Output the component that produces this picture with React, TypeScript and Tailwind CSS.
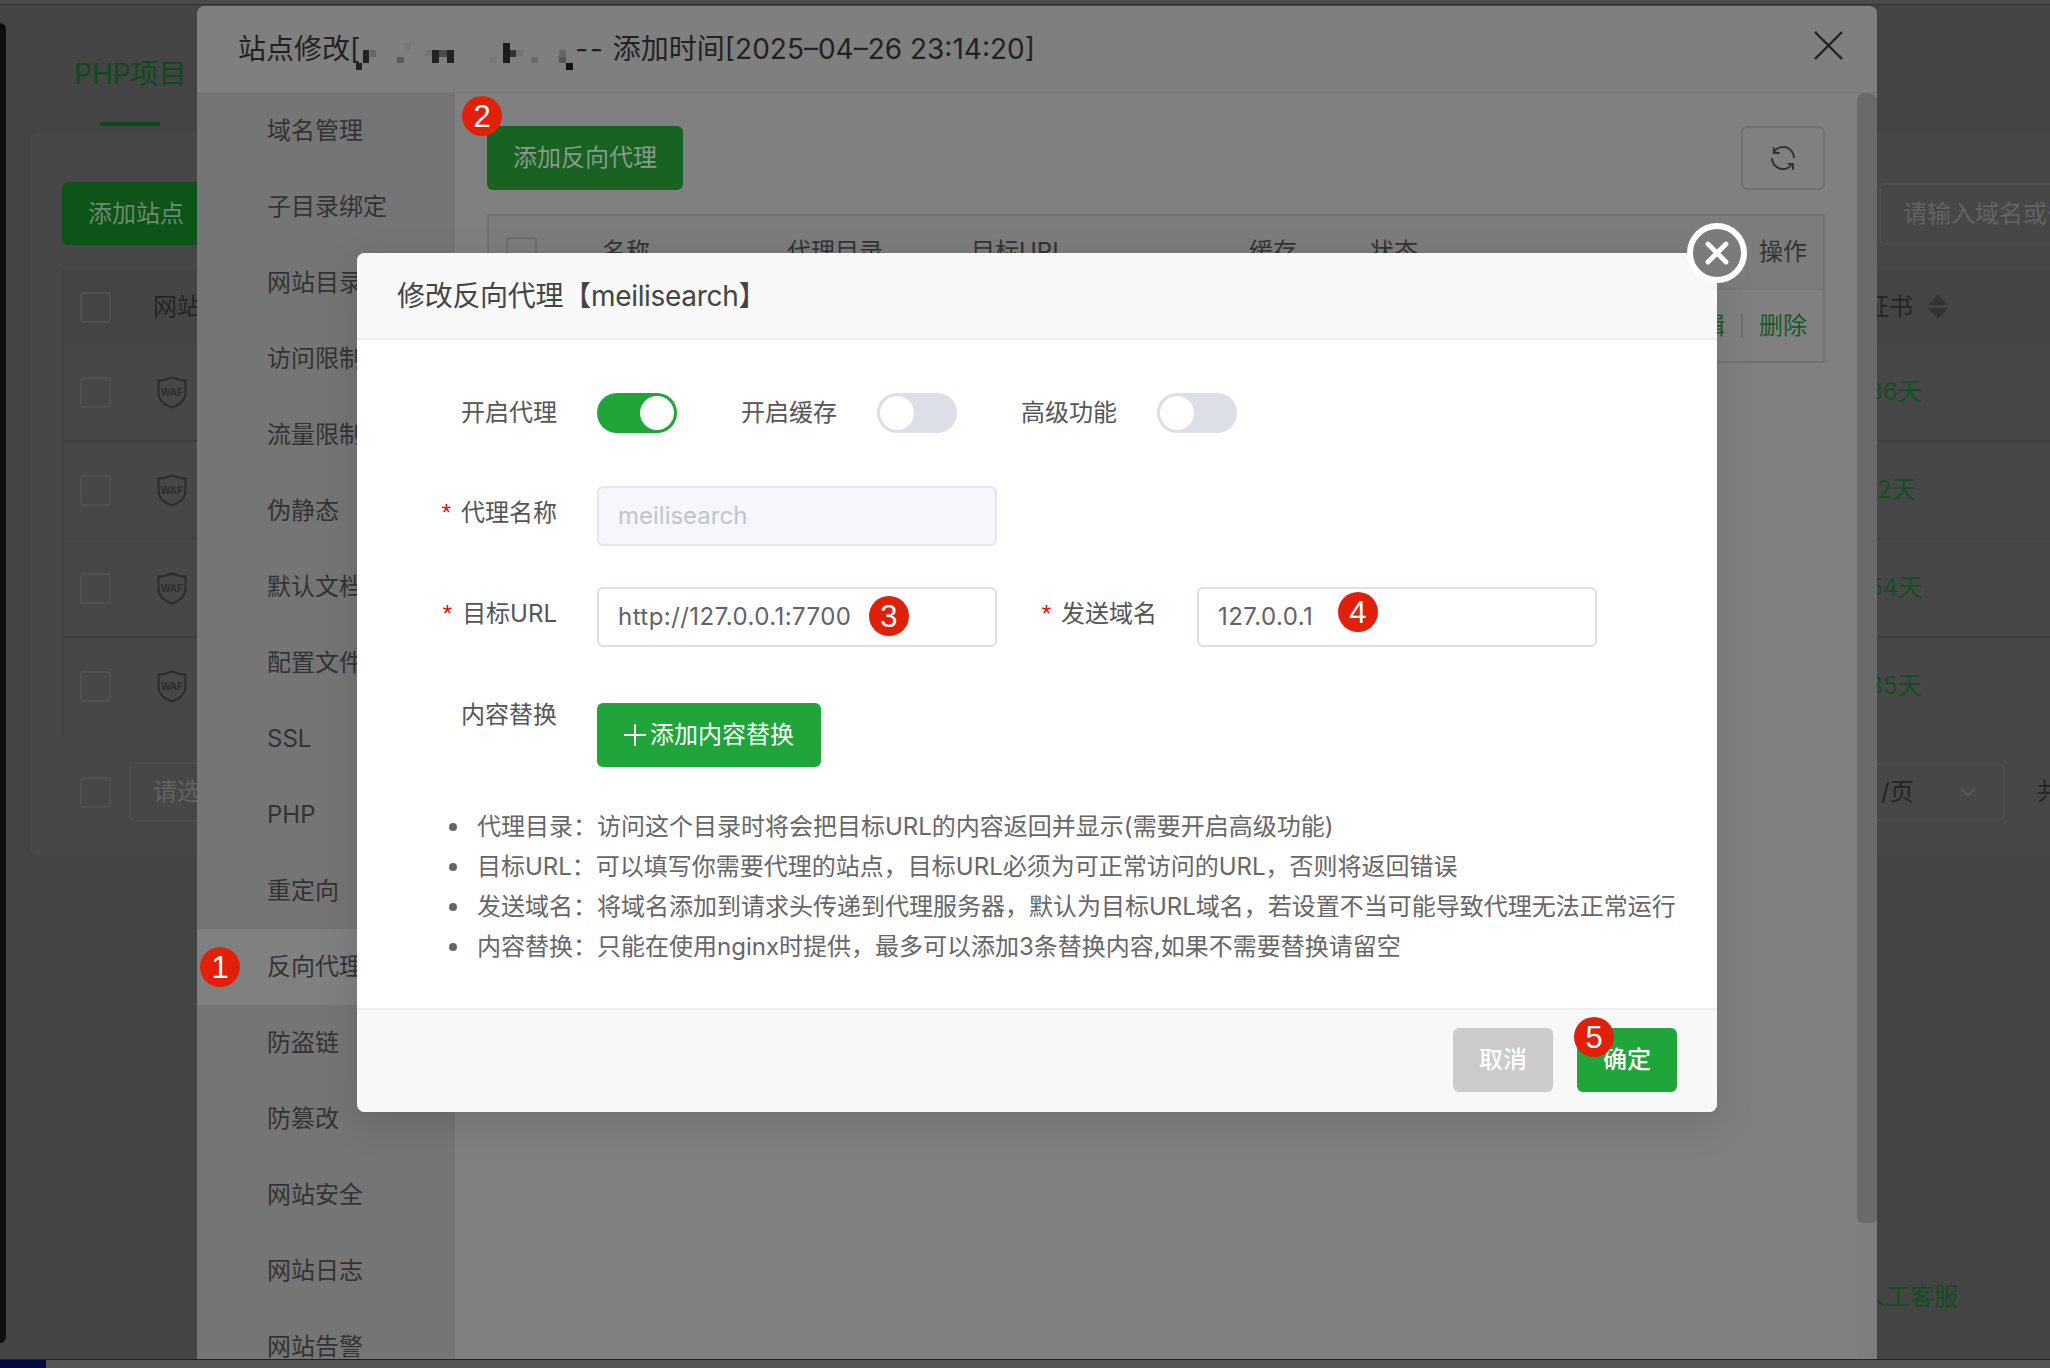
import { ChevronDown, X } from 'lucide-react';
import type { ReactNode } from 'react';

const menuItems = ['域名管理', '子目录绑定', '网站目录', '访问限制', '流量限制', '伪静态', '默认文档', '配置文件', 'SSL', 'PHP', '重定向', '反向代理', '防盗链', '防篡改', '网站安全', '网站日志', '网站告警'];

const siteRows = [
    { days: '36天', offset: 'ml-[1681px]', line: 'border-[#3e3e3e]' },
    { days: '2天', offset: 'ml-[1690px]', line: 'border-[#424242]' },
    { days: '54天', offset: 'ml-[1681px]', line: 'border-[#3e3e3e]' },
    { days: '35天', offset: 'ml-[1681px]', line: 'border-transparent' },
];

const tips = [
    '代理目录：访问这个目录时将会把目标URL的内容返回并显示(需要开启高级功能)',
    '目标URL：可以填写你需要代理的站点，目标URL必须为可正常访问的URL，否则将返回错误',
    '发送域名：将域名添加到请求头传递到代理服务器，默认为目标URL域名，若设置不当可能导致代理无法正常运行',
    '内容替换：只能在使用nginx时提供，最多可以添加3条替换内容,如果不需要替换请留空',
];

// pixelated part of the site name in the title
const mosaic = [
    [7, 7, 6, 13, '#222'], [14, 7, 6, 7, '#666'], [0, 20, 6, 7, '#222'], [41, 14, 7, 6, '#5a5a5a'], [48, 0, 7, 7, '#787878'],
    [76, 7, 7, 13, '#222'], [69, 7, 7, 6, '#767676'], [83, 7, 8, 7, '#4a4a4a'], [91, 7, 7, 13, '#222'],
    [134, 14, 6, 6, '#777'], [147, 0, 7, 20, '#1c1c1c'], [154, 7, 6, 7, '#333'], [160, 7, 7, 6, '#747474'],
    [175, 14, 7, 6, '#6a6a6a'], [203, 7, 7, 7, '#666'], [203, 14, 7, 6, '#555'], [210, 20, 7, 7, '#111'],
];

function Badge({ n, className }: { n: number; className: string }) {
    return (
        <span className={`absolute flex h-10 w-10 items-center justify-center rounded-full bg-[#e1200c] font-['Liberation_Sans',sans-serif] text-[31px] leading-none text-white ${className}`}>
            {n}
        </span>
    );
}

function Checkbox({ className }: { className: string }) {
    return <div className={`h-[31px] w-[31px] shrink-0 rounded-[4px] border-2 ${className}`} />;
}

function WafShield() {
    return (
        <svg viewBox="0 0 30 33" className="h-[33px] w-[30px] shrink-0">
            <path d="M15 1.5 C20 3.5 24 4.5 28.5 4.5 V17 C28.5 24 22 29 15 31.5 C8 29 1.5 24 1.5 17 V4.5 C6 4.5 10 3.5 15 1.5 Z" fill="none" stroke="#2c2c2c" strokeWidth="2" />
            <text x="15" y="20" textAnchor="middle" fontSize="10" fontWeight="700" fill="#2c2c2c" fontFamily="Liberation Sans">WAF</text>
        </svg>
    );
}

function Switch({ on }: { on?: boolean }) {
    return (
        <div className={`flex h-10 w-20 shrink-0 items-center rounded-full p-[3px] ${on ? 'justify-end bg-[#20a53a]' : 'bg-[#dcdfe6]'}`}>
            <div className="h-[34px] w-[34px] rounded-full bg-white" />
        </div>
    );
}

function FieldLabel({ children, width, required }: { children: ReactNode; width: string; required?: boolean }) {
    return (
        <div className={`${width} shrink-0 text-right leading-[54px] text-[#555]`}>
            {required && <span className="mr-[10px] font-['Liberation_Sans',sans-serif] text-[#f00]">*</span>}
            {children}
        </div>
    );
}

function ReverseProxyDialog() {
    return (
        <div className="absolute left-[357px] top-[253px] z-20 flex h-[859px] w-[1360px] flex-col rounded-lg bg-white text-[24px] shadow-[0_12px_40px_rgba(0,0,0,0.12)]">
            <div className="flex h-[87px] shrink-0 items-center rounded-t-lg border-b-2 border-[#eee] bg-[#f8f8f8] pl-[40px] text-[28px] tracking-[-0.3px] text-[#444]">
                修改反向代理【meilisearch】
            </div>
            <button className="absolute -right-[30px] -top-[30px] flex h-[60px] w-[60px] items-center justify-center rounded-full border-[6px] border-white bg-[#7b7b7b]">
                <X className="h-[36px] w-[36px] text-white" strokeWidth={3.2} />
            </button>

            <div className="flex flex-1 flex-col pt-[53px]">
                <div className="flex items-center">
                    <div className="w-[200px] text-right text-[#555]">开启代理</div>
                    <div className="ml-[40px]"><Switch on /></div>
                    <div className="ml-[64px] text-[#555]">开启缓存</div>
                    <div className="ml-[40px]"><Switch /></div>
                    <div className="ml-[64px] text-[#555]">高级功能</div>
                    <div className="ml-[40px]"><Switch /></div>
                </div>

                <div className="mt-[53px] flex">
                    <FieldLabel width="w-[200px]" required>代理名称</FieldLabel>
                    <div className="ml-[40px] flex h-[60px] w-[400px] items-center rounded-md border-2 border-[#e4e7ed] bg-[#f5f7fa] pl-[19px] text-[#c0c4cc]">meilisearch</div>
                </div>

                <div className="mt-[41px] flex">
                    <FieldLabel width="w-[200px]" required>目标URL</FieldLabel>
                    <div className="relative ml-[40px] flex h-[60px] w-[400px] items-center rounded-md border-2 border-[#dcdfe6] pl-[19px] tracking-[0.45px] text-[#606266]">
                        http://127.0.0.1:7700
                        <Badge n={3} className="left-[270px] top-[7px]" />
                    </div>
                    <FieldLabel width="w-[160px]" required>发送域名</FieldLabel>
                    <div className="relative ml-[40px] flex h-[60px] w-[400px] items-center rounded-md border-2 border-[#dcdfe6] pl-[19px] tracking-[0.45px] text-[#606266]">
                        127.0.0.1
                        <Badge n={4} className="left-[139px] top-[3px]" />
                    </div>
                </div>

                <div className="mt-[56px] flex">
                    <div className="w-[200px] text-right leading-6 text-[#555]">内容替换</div>
                    <button className="ml-[40px] flex h-[64px] w-[224px] items-center justify-center rounded-md bg-[#20a53a] text-white">
                        <svg viewBox="0 0 22 22" className="mr-[4px] h-[22px] w-[22px]"><path d="M11 0V22M0 11H22" stroke="#fff" strokeWidth="2" /></svg>
                        添加内容替换
                    </button>
                </div>

                <ul className="mt-[40px] pl-[92px] leading-[40px] text-[#666]">
                    {tips.map((tip) => (
                        <li key={tip} className="flex items-center whitespace-nowrap">
                            <span className="mr-[20px] h-[8px] w-[8px] shrink-0 rounded-full bg-[#666]" />
                            {tip}
                        </li>
                    ))}
                </ul>
            </div>

            <div className="flex h-[104px] shrink-0 items-start justify-end gap-[24px] rounded-b-lg border-t-2 border-[#eee] bg-[#f8f8f8] pr-[40px] pt-[18px] font-medium text-white">
                <button className="h-[64px] w-[100px] rounded-md bg-[#cbcbcb]">取消</button>
                <button className="relative h-[64px] w-[100px] rounded-md bg-[#20a53a]">
                    确定
                    <Badge n={5} className="-left-[3px] -top-[11px] font-normal" />
                </button>
            </div>
        </div>
    );
}

function SiteSettingsDialog() {
    return (
        <div className="absolute left-[197px] top-[6px] z-10 flex h-[1353px] w-[1680px] flex-col overflow-hidden rounded-t-lg bg-[#808080] text-[24px]">
            <div className="flex h-[87px] shrink-0 items-center border-b border-[#787878] bg-[#7f7f7f] pl-[41px] text-[28px] text-[#222]">
                <span>站点修改[</span>
                <svg viewBox="0 0 217 27" className="-ml-[4px] mt-[14px] h-[27px] w-[217px] shrink-0">
                    {mosaic.map(([x, y, w, h, fill], i) => (
                        <rect key={i} x={x} y={y} width={w} height={h} fill={fill as string} />
                    ))}
                </svg>
                <span className="ml-[2px]"><span className="tracking-[2px]">--</span> 添加时间[2025–04–26 23:14:20]</span>
                <svg viewBox="0 0 29 29" className="-mt-[8px] ml-auto mr-[34px] h-[29px] w-[29px]">
                    <path d="M1 1L28 28M28 1L1 28" stroke="#222" strokeWidth="2.4" />
                </svg>
            </div>

            <div className="flex min-h-0 flex-1">
                <div className="w-[258px] shrink-0 bg-[#757575] text-[#333]">
                    {menuItems.map((item) => (
                        <div key={item} className={`relative flex h-[76px] items-center pl-[70px] ${item === '反向代理' ? 'bg-[#808080]' : ''}`}>
                            {item}
                            {item === '反向代理' && <Badge n={1} className="left-[3px] top-[18px]" />}
                        </div>
                    ))}
                </div>

                <div className="flex-1 pl-[32px] pr-[32px] pt-[33px]">
                    <div className="flex items-center justify-between">
                        <button className="relative h-[64px] w-[196px] rounded-md bg-[#186222] text-[#8a9a8c]">
                            添加反向代理
                            <Badge n={2} className="-left-[25px] -top-[30px]" />
                        </button>
                        <div className="flex h-[64px] w-[84px] items-center justify-center rounded-md border-2 border-[#707070]">
                            <svg viewBox="0 0 26 26" className="h-[26px] w-[26px]" fill="none" stroke="#333" strokeWidth="2">
                                <path d="M3.6 7.2 A11 11 0 0 1 24 13" />
                                <path d="M3.7 2.3 V8 H9.7" />
                                <path d="M2 13 A11 11 0 0 0 22.4 18.8" />
                                <path d="M17.7 19 H23 V24.7" />
                            </svg>
                        </div>
                    </div>

                    <div className="mt-[24px] h-[149px] border-2 border-[#717171] text-[#333]">
                        <div className="grid h-[74px] grid-cols-[113px_185px_184px_278px_121px_1fr_auto] items-center border-b-2 border-[#787878] bg-[#7c7c7c] pr-[16px]">
                            <Checkbox className="ml-[17px] border-[#6d6d6d]" />
                            <span>名称</span>
                            <span>代理目录</span>
                            <span>目标URL</span>
                            <span>缓存</span>
                            <span>状态</span>
                            <span>操作</span>
                        </div>
                        <div className="flex h-[71px] items-center justify-end gap-[16px] pr-[16px] text-[#175a25]">
                            <span>编辑</span>
                            <span className="h-[24px] w-[2px] bg-[#6e6e6e]" />
                            <span>删除</span>
                        </div>
                    </div>
                </div>

                <div className="w-[20px] shrink-0 bg-[#7e7e7e]">
                    <div className="h-[1130px] rounded-b-md rounded-t-lg bg-[#6a6a6a]" />
                </div>
            </div>
        </div>
    );
}

function SiteList() {
    return (
        <div className="min-w-0 flex-1 overflow-hidden pl-[24px] text-[24px] text-[#242424]">
            <div className="w-[2080px]">
                <div className="flex h-[127px] flex-col">
                    <span className="ml-[44px] mt-[52px] text-[28px] leading-[34px] text-[#0e4a1c]">PHP项目</span>
                    <div className="ml-[70px] mt-[31px] h-[4px] w-[60px] shrink-0 bg-[#0e4a1c]" />
                </div>
                <div className="h-[724px] rounded-lg bg-[#474747] px-[32px] pt-[50px]">
                    <div className="flex items-center">
                        <button className="h-[63px] w-[200px] shrink-0 rounded-md bg-[#0e5418] pl-[26px] text-left text-[#6a8a6e]">添加站点</button>
                        <div className="ml-[1617px] flex h-[62px] w-[300px] shrink-0 items-center whitespace-nowrap rounded-md border-2 border-[#4d4d4d] pl-[22px] text-[#636363]">请输入域名或备注</div>
                    </div>
                    <div className="mt-[25px] border-l-2 border-[#414141]">
                        <div className="flex h-[74px] items-center bg-[#444]">
                            <Checkbox className="ml-[16px] border-[#505050]" />
                            <span className="ml-[42px]">网站名</span>
                            <span className="ml-[1640px]">证书</span>
                            <svg viewBox="0 0 20 24" className="ml-[15px] h-[24px] w-[20px]"><path d="M10 0L20 10H0ZM0 13H20L10 24Z" fill="#333" /></svg>
                        </div>
                        {siteRows.map((row) => (
                            <div key={row.days} className={`flex h-[98px] items-center border-b-2 ${row.line}`}>
                                <Checkbox className="ml-[16px] border-[#505050]" />
                                <div className="ml-[46px]"><WafShield /></div>
                                <span className={`${row.offset} text-[#124f22]`}>{row.days}</span>
                            </div>
                        ))}
                    </div>
                    <div className="mt-[26px] flex items-center pl-[18px]">
                        <Checkbox className="border-[#505050]" />
                        <div className="ml-[18px] flex h-[60px] w-[200px] items-center rounded-md border-2 border-[#4d4d4d] pl-[22px] text-[#636363]">请选择</div>
                        <div className="ml-[1524px] flex h-[58px] w-[152px] items-center rounded-md border-2 border-[#4d4d4d] pl-[26px]">
                            <span>/页</span>
                            <ChevronDown className="ml-[41px] h-[26px] w-[26px] text-[#5a5a5a]" strokeWidth={1.5} />
                        </div>
                        <span className="ml-[32px]">共</span>
                    </div>
                </div>
                <div className="ml-[1832px] mt-[423px] text-[#124f22]">人工客服</div>
            </div>
        </div>
    );
}

export default function App() {
    return (
        <div className="relative flex h-[1368px] w-[2050px] flex-col overflow-hidden bg-[#444] font-['Inter','Noto_Sans_CJK_SC',sans-serif]">
            <div className="h-[5px] shrink-0 border-b border-[#333] bg-[#4b4b4b]" />
            <div className="flex min-h-0 flex-1">
                <div className="mb-[16px] mt-[18px] w-[6px] shrink-0 rounded-r-md bg-[#0b0d10]" />
                <SiteList />
            </div>
            <div className="flex h-[9px] shrink-0 border-t border-[#222] bg-[#555]">
                <div className="w-[46px] bg-[#050a40]" />
            </div>
            <SiteSettingsDialog />
            <ReverseProxyDialog />
        </div>
    );
}
